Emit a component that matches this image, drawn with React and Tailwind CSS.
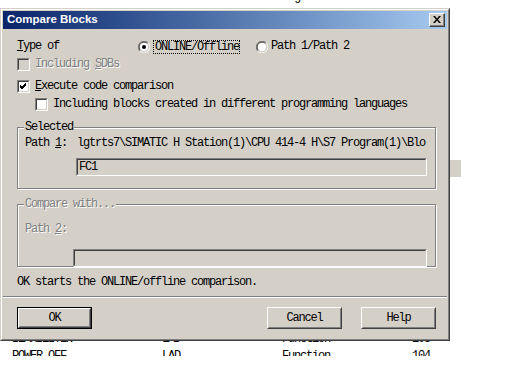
import React from 'react';

const mono = "font-['Liberation_Mono',monospace] text-[12px] tracking-[-1.2px] leading-[13px]";

function CheckBox({ checked, disabled }) {
    return (
        <div className="w-[13px] h-[13px] border border-t-[#808080] border-l-[#808080] border-b-white border-r-white shrink-0">
            <div
                className={`w-full h-full border border-t-[#404040] border-l-[#404040] border-b-[#d4d0c8] border-r-[#d4d0c8] flex items-center justify-center ${
                    disabled ? 'bg-[#d4d0c8]' : 'bg-white'
                }`}
            >
                {checked && (
                    <svg width="7" height="7" viewBox="0 0 7 7">
                        <path d="M0 2 L2 4 L6 0 M0 3 L2 5 L6 1 M0 4 L2 6 L6 2" stroke="#000" strokeWidth="1" fill="none" />
                    </svg>
                )}
            </div>
        </div>
    );
}

function Radio({ checked }) {
    return (
        <svg width="12" height="12" viewBox="0 0 12 12" className="shrink-0">
            <path d="M10.24 1.76 A6 6 0 0 0 1.76 10.24" stroke="#808080" fill="none" strokeWidth="1" />
            <path d="M1.76 10.24 A6 6 0 0 0 10.24 1.76" stroke="#ffffff" fill="none" strokeWidth="1" />
            <path d="M9.5 2.5 A4.9 4.9 0 0 0 2.5 9.5" stroke="#404040" fill="none" strokeWidth="1" />
            <path d="M2.5 9.5 A4.9 4.9 0 0 0 9.5 2.5" stroke="#d4d0c8" fill="none" strokeWidth="1" />
            <circle cx="6" cy="6" r="4" fill="#fff" />
            {checked && <circle cx="6" cy="6" r="2" fill="#000" />}
        </svg>
    );
}

function Button({ children, isDefault }) {
    const inner = (
        <div className="w-full h-full border border-t-white border-l-white border-b-[#404040] border-r-[#404040]">
            <div className="w-full h-full border border-t-[#d4d0c8] border-l-[#d4d0c8] border-b-[#808080] border-r-[#808080] flex items-center justify-center">
                <span className={mono}>{children}</span>
            </div>
        </div>
    );
    return (
        <div className={`w-[75px] h-[22px] bg-[#d4d0c8] ${isDefault ? 'border border-black' : ''}`}>{inner}</div>
    );
}

function TextBox({ value, className }) {
    return (
        <div className={`h-[18px] border border-t-[#808080] border-l-[#808080] border-b-white border-r-white ${className}`}>
            <div className="w-full h-full border border-t-[#404040] border-l-[#404040] border-b-[#d4d0c8] border-r-[#d4d0c8] bg-[#d4d0c8] flex items-center pl-[1px]">
                <span className={mono}>{value}</span>
            </div>
        </div>
    );
}

function Group({ label, disabled, className, children }) {
    return (
        <div className={`relative ml-[14px] w-[419px] border border-[#808080] shadow-[inset_1px_1px_0_#fff,1px_1px_0_#fff] ${className}`}>
            <span
                className={`absolute -top-[7px] left-[6px] px-[1px] bg-[#d4d0c8] ${mono} ${
                    disabled ? 'text-[#808080] [text-shadow:1px_1px_0_#fff]' : 'text-black'
                }`}
            >
                {label}
            </span>
            {children}
        </div>
    );
}

function BgRow({ name, lang, type, num, className }) {
    return (
        <div className={`absolute left-0 w-full flex text-black ${mono} ${className}`}>
            <span className="ml-[12px] w-[150px]">{name}</span>
            <span className="w-[120px]">{lang}</span>
            <span className="w-[130px]">{type}</span>
            <span>{num}</span>
        </div>
    );
}

export default function App() {
    const dis = 'text-[#808080] [text-shadow:1px_1px_0_#fff]';

    return (
        <div className="relative w-[512px] h-[384px] bg-white overflow-hidden">
            {/* window behind */}
            <BgRow name="COMPLETE RESTART" lang="LAD" type="Organization Block" num="101" className="-top-[9px]" />
            <BgRow name="BEARBEITEN" lang="LAD" type="Function" num="103" className="top-[333px]" />
            <div className="absolute left-0 top-[350px] w-full h-[6px] overflow-hidden">
                <BgRow name="POWER OFF" lang="LAD" type="Function" num="104" className="top-0" />
            </div>
            <div className="absolute left-0 top-[160px] w-[3px] h-[17px] bg-[#d4d0c8]" />
            <div className="absolute left-[449px] top-[160px] w-[12px] h-[17px] bg-[#d4d0c8]" />

            {/* dialog */}
            <div className="absolute left-0 top-[8px] w-[450px] h-[333px] bg-[#d4d0c8] border border-t-[#d4d0c8] border-l-[#d4d0c8] border-b-[#404040] border-r-[#404040]">
                <div className="w-full h-full border border-t-white border-l-white border-b-[#808080] border-r-[#808080] p-[1px] flex flex-col">
                    {/* title bar */}
                    <div className="h-[18px] flex items-center justify-between bg-gradient-to-r from-[#0a246a] to-[#a6caf0] pl-[4px] pr-[2px]">
                        <span className="font-['Liberation_Sans',sans-serif] font-bold text-[11.5px] text-white leading-none">
                            Compare Blocks
                        </span>
                        <div className="w-[16px] h-[14px] bg-[#d4d0c8] border border-t-white border-l-white border-b-[#404040] border-r-[#404040]">
                            <div className="w-full h-full border-b border-r border-b-[#808080] border-r-[#808080] flex items-center justify-center">
                                <svg width="8" height="7" viewBox="0 0 8 7">
                                    <path d="M0 0 L2 0 L4 2.5 L6 0 L8 0 L5 3.5 L8 7 L6 7 L4 4.5 L2 7 L0 7 L3 3.5 Z" fill="#000" />
                                </svg>
                            </div>
                        </div>
                    </div>

                    {/* body */}
                    <div className="flex flex-col">
                        <div className="flex items-center h-[13px] mt-[11px] pl-[14px]">
                            <span className={`${mono} w-[121px]`}>
                                <u>T</u>ype of
                            </span>
                            <Radio checked />
                            <span className={`${mono} ml-[3px] border border-dotted border-black px-0 h-[14px] w-[87px] pl-[1px]`}>
                                ONLINE/Offline
                            </span>
                            <div className="ml-[16px] flex items-center">
                                <Radio />
                                <span className={`${mono} ml-[3px]`}>Path 1/Path 2</span>
                            </div>
                        </div>

                        <div className="flex items-center h-[13px] mt-[5px] pl-[14px]">
                            <CheckBox disabled />
                            <span className={`${mono} ml-[5px] ${dis}`}>
                                Including <u>S</u>DBs
                            </span>
                        </div>

                        <div className="flex items-center h-[13px] mt-[9px] pl-[14px]">
                            <CheckBox checked />
                            <span className={`${mono} ml-[5px]`}>
                                <u>E</u>xecute code comparison
                            </span>
                        </div>

                        <div className="flex items-center h-[13px] mt-[5px] pl-[32px]">
                            <CheckBox />
                            <span className={`${mono} ml-[5px]`}>Including blocks created in different programming languages</span>
                        </div>

                        <Group label="Selected" className="mt-[16px] h-[62px]">
                            <div className="flex pl-[7px] pt-[9px]">
                                <span className={`${mono} w-[52px]`}>
                                    Path <u>1</u>:
                                </span>
                                <span className={`${mono} whitespace-nowrap overflow-hidden w-[350px]`}>
                                    lgtrts7\SIMATIC H Station(1)\CPU 414-4 H\S7 Program(1)\Blo
                                </span>
                            </div>
                            <TextBox value="FC1" className="ml-[58px] mt-[8px] w-[351px]" />
                        </Group>

                        <Group label="Compare with..." disabled className="mt-[15px] h-[63px]">
                            <div className="pl-[7px] pt-[9px]">
                                <span className={`${mono} ${dis}`}>
                                    Path <u>2</u>:
                                </span>
                            </div>
                            <TextBox value="" className="ml-[55px] mt-[11px] w-[354px]" />
                        </Group>

                        <div className={`${mono} mt-[9px] pl-[14px]`}>OK starts the ONLINE/offline comparison.</div>

                        <div className="mt-[7px] h-[2px] border-t border-t-[#808080] border-b border-b-white" />

                        <div className="flex mt-[9px] pl-[14px] pr-[11px]">
                            <Button isDefault>OK</Button>
                            <div className="ml-auto flex gap-[19px]">
                                <Button>Cancel</Button>
                                <Button>Help</Button>
                            </div>
                        </div>
                    </div>
                </div>
            </div>
        </div>
    );
}
